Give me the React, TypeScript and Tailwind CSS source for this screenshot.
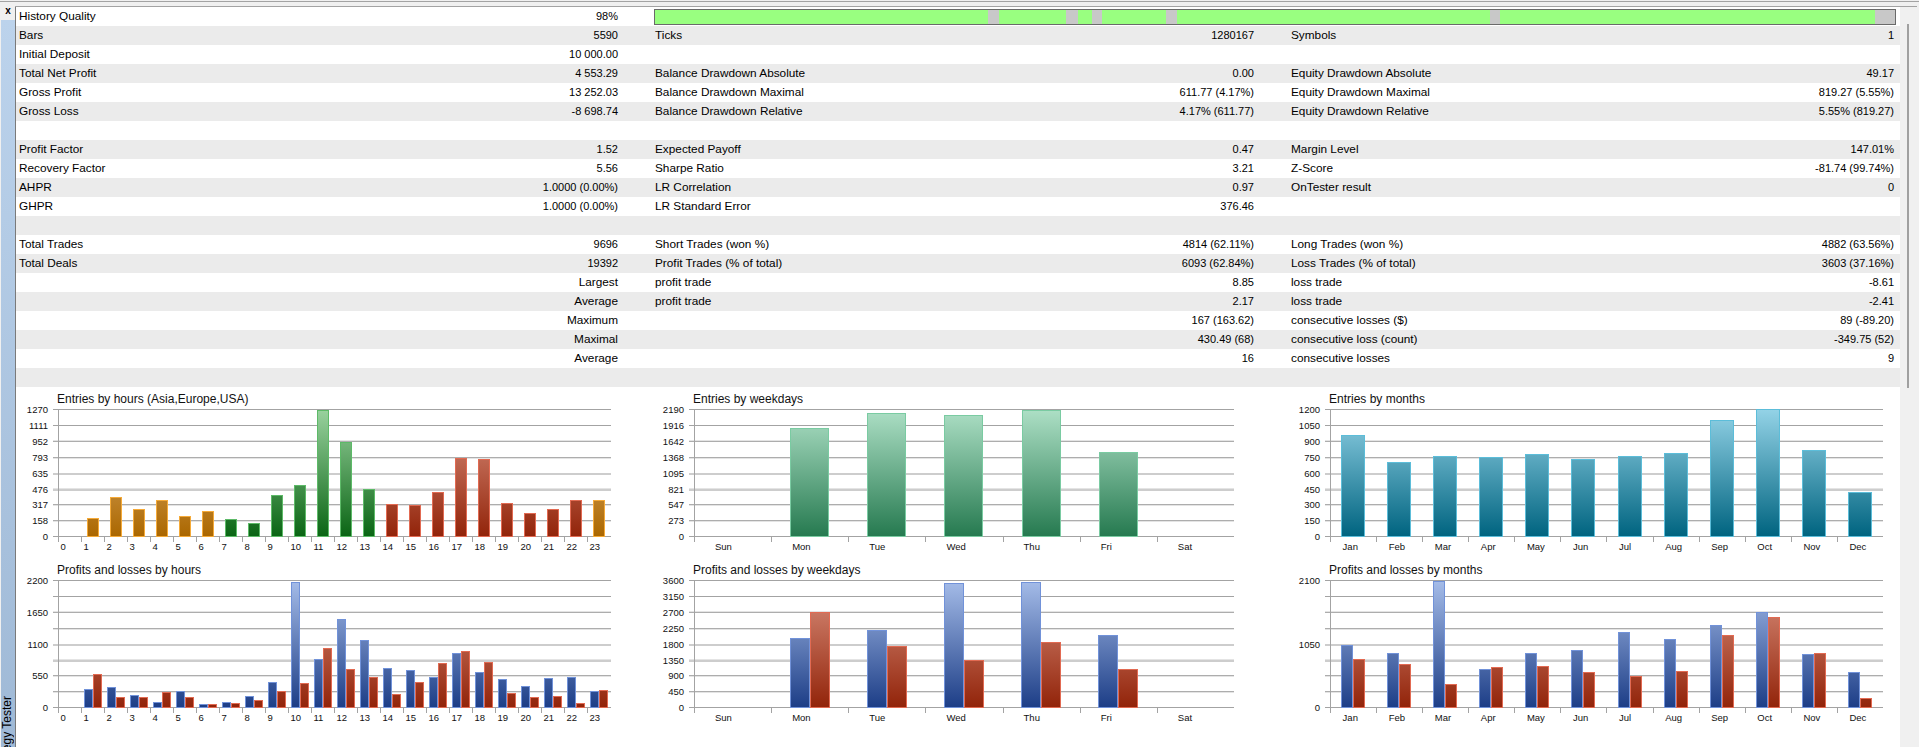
const FONT = "font-['Liberation_Sans',Arial,sans-serif]";

const ROWS: string[][] = [
  ["Bars", "5590", "Ticks", "1280167", "Symbols", "1"],
  ["Initial Deposit", "10 000.00", "", "", "", ""],
  ["Total Net Profit", "4 553.29", "Balance Drawdown Absolute", "0.00", "Equity Drawdown Absolute", "49.17"],
  ["Gross Profit", "13 252.03", "Balance Drawdown Maximal", "611.77 (4.17%)", "Equity Drawdown Maximal", "819.27 (5.55%)"],
  ["Gross Loss", "-8 698.74", "Balance Drawdown Relative", "4.17% (611.77)", "Equity Drawdown Relative", "5.55% (819.27)"],
  ["", "", "", "", "", ""],
  ["Profit Factor", "1.52", "Expected Payoff", "0.47", "Margin Level", "147.01%"],
  ["Recovery Factor", "5.56", "Sharpe Ratio", "3.21", "Z-Score", "-81.74 (99.74%)"],
  ["AHPR", "1.0000 (0.00%)", "LR Correlation", "0.97", "OnTester result", "0"],
  ["GHPR", "1.0000 (0.00%)", "LR Standard Error", "376.46", "", ""],
  ["", "", "", "", "", ""],
  ["Total Trades", "9696", "Short Trades (won %)", "4814 (62.11%)", "Long Trades (won %)", "4882 (63.56%)"],
  ["Total Deals", "19392", "Profit Trades (% of total)", "6093 (62.84%)", "Loss Trades (% of total)", "3603 (37.16%)"],
  ["", "Largest", "profit trade", "8.85", "loss trade", "-8.61"],
  ["", "Average", "profit trade", "2.17", "loss trade", "-2.41"],
  ["", "Maximum", "", "167 (163.62)", "consecutive losses ($)", "89 (-89.20)"],
  ["", "Maximal", "", "430.49 (68)", "consecutive loss (count)", "-349.75 (52)"],
  ["", "Average", "", "16", "consecutive losses", "9"],
  ["", "", "", "", "", ""],
];

// [width, isGap] of the history quality bar
const QUALITY: [number, boolean][] = [
  [333, false], [11, true], [67, false], [12, true], [14, false], [10, true],
  [64, false], [11, true], [313, false], [10, true], [375, false], [20, true],
];

const COLORS = {
  orange: { top: "#e8c08a", bottom: "#ab6700", edge: "#f5aa38" },
  green: { top: "#9ad29f", bottom: "#0a6514", edge: "#5dba68" },
  red: { top: "#dc9380", bottom: "#92240a", edge: "#e26a52" },
  sea: { top: "#aee0c6", bottom: "#267a50", edge: "#7acba2" },
  teal: { top: "#94d3e7", bottom: "#006480", edge: "#5cbdd9" },
  blue: { top: "#a6bde9", bottom: "#1d3e87", edge: "#7192d9" },
};
type ColorName = keyof typeof COLORS;

const GRID_Y = [22, 38, 54, 70, 86, 102, 117, 133, 149];
const GRID_STYLE = [
  { main: "#a3a3a3", h: 1 },
  { main: "#a3a3a3", h: 1 },
  { main: "#adadad", h: 1, halo: -1 },
  { main: "#adadad", h: 1, halo: 1 },
  { main: "#cdcdcd", h: 2 },
  { main: "#cdcdcd", h: 2, halo: -1 },
  { main: "#adadad", h: 1, halo: 1 },
  { main: "#adadad", h: 1, halo: 1 },
  { main: "#a3a3a3", h: 1 },
];

const HOURS = Array.from({ length: 24 }, (_, i) => String(i));
const DAYS = ["Sun", "Mon", "Tue", "Wed", "Thu", "Fri", "Sat"];
const MONTHS = ["Jan", "Feb", "Mar", "Apr", "May", "Jun", "Jul", "Aug", "Sep", "Oct", "Nov", "Dec"];

function hourColor(i: number): ColorName {
  if (i >= 7 && i <= 13) return "green";
  if (i >= 14 && i <= 22) return "red";
  return "orange";
}

type ChartProps = {
  id: string;
  title: string;
  width: number;
  left: number;
  right: number;
  cell: number;
  titleX: number;
  max: number;
  ticks: (string | null)[];
  labels: string[];
  labelOffset: number;
  barWidth: number;
  gap?: number;
  series: { color: (i: number) => ColorName; values: number[] }[];
};

function Chart({ id, title, width, left, right, cell, titleX, max, ticks, labels, labelOffset, barWidth, gap = 0, series }: ChartProps) {
  const bottom = 149;
  const plot = 127;
  const used = Object.keys(COLORS) as ColorName[];
  const total = series.length * barWidth + (series.length - 1) * gap;

  return (
    <svg width={width} height={171} className={`block ${FONT}`}>
      <defs>
        {used.map((c) => (
          <linearGradient key={c} id={`${id}-${c}`} gradientUnits="userSpaceOnUse" x1="0" x2="0" y1="22" y2="149">
            <stop offset="0" stopColor={COLORS[c].top} />
            <stop offset="1" stopColor={COLORS[c].bottom} />
          </linearGradient>
        ))}
      </defs>

      <text x={titleX} y={16} fontSize={12} fill="#111">{title}</text>

      {/* grid */}
      <g shapeRendering="crispEdges">
        {GRID_Y.map((y, i) => {
          const s = GRID_STYLE[i];
          return (
            <g key={y}>
              {s.halo && <rect x={left - 5} y={y + (s.halo < 0 ? -1 : 1)} width={right - left + 5} height={1} fill="#e4e4e4" />}
              <rect x={left - 5} y={y} width={right - left + 5} height={s.h} fill={s.main} />
            </g>
          );
        })}
        <rect x={left} y={22} width={1} height={132} fill="#a3a3a3" />
        {labels.map((_, i) => (
          <rect key={i} x={Math.round(left + cell * i)} y={149} width={1} height={6} fill="#a3a3a3" />
        ))}
      </g>

      {/* bars */}
      <g shapeRendering="crispEdges">
        {labels.map((_, i) =>
          series.map((s, k) => {
            const v = s.values[i] ?? 0;
            if (!v) return null;
            const h = Math.round((v / max) * plot);
            const x = Math.round(left + cell * i + (cell - total) / 2 + k * (barWidth + gap));
            const name = s.color(i);
            return (
              <g key={`${i}-${k}`}>
                <rect x={x} y={bottom - h} width={barWidth} height={h + 1} fill={COLORS[name].edge} />
                <rect x={x + 1} y={bottom - h + 1} width={barWidth - 2} height={h - 1} fill={`url(#${id}-${name})`} />
              </g>
            );
          })
        )}
      </g>

      {/* axis text */}
      {ticks.map((t, i) =>
        t ? (
          <text key={i} x={left - 10} y={GRID_Y[8 - i] + 4} fontSize={9.5} textAnchor="end" fill="#111">{t}</text>
        ) : null
      )}
      {labels.map((l, i) => (
        <text key={l} x={left + cell * i + labelOffset} y={163} fontSize={9.5} fill="#111">{l}</text>
      ))}
    </svg>
  );
}

const RED = () => "red" as ColorName;
const BLUE = () => "blue" as ColorName;

function Value({ text }: { text: string }) {
  // words in the value column ("Largest", "Average") are set like labels
  return <span className={/^[A-Z]/.test(text) ? "text-[11.8px]" : "text-[11px]"}>{text}</span>;
}

function StatRow({ cells, shaded }: { cells: string[]; shaded: boolean }) {
  return (
    <div className={`grid h-[19px] grid-cols-[636px_636px_611px] items-center leading-[19px] ${shaded ? "bg-[#ebebeb]" : "bg-white"}`}>
      <div className="flex justify-between pl-[3px] pr-[34px]">
        <span>{cells[0]}</span>
        <Value text={cells[1]} />
      </div>
      <div className="flex justify-between pl-[3px] pr-[34px]">
        <span>{cells[2]}</span>
        <Value text={cells[3]} />
      </div>
      <div className="flex justify-between pl-[3px] pr-[5px]">
        <span>{cells[4]}</span>
        <Value text={cells[5]} />
      </div>
    </div>
  );
}

export default function App() {
  return (
    <div className={`flex h-[747px] w-[1919px] flex-col overflow-hidden bg-[#f0f0f0] text-[11.8px] text-black ${FONT}`}>
      <div className="mt-px h-px shrink-0 bg-[#a3a3a3]" />
      <div className="flex min-h-0 flex-1">
        {/* Docked tab strip */}
        <div className="flex w-[15px] shrink-0 flex-col pl-px">
          <div className="flex h-[18px] items-center justify-center text-[10px] font-bold leading-none">x</div>
          <div className="flex-1 overflow-hidden bg-linear-to-b from-[#bcd3ec] to-[#9fb9d6] pt-[676px] pl-px">
            <div className="rotate-180 whitespace-nowrap text-[12px] leading-[11px] [writing-mode:vertical-rl]">
              Strategy Tester
            </div>
          </div>
        </div>

        <div className="flex min-w-0 flex-1 flex-col pt-[4px]">
          <div className="h-px w-[1902px] shrink-0 bg-[#a3a3a3]" />
          <div className="flex min-h-0 flex-1">
            <div className="h-full w-px shrink-0 bg-[#7a7a7a]" />
            <div className="w-[1884px] shrink-0 bg-white">
              <div className="grid h-[19px] grid-cols-[636px_1248px] items-center bg-white leading-[19px]">
                <div className="flex justify-between pl-[3px] pr-[34px]">
                  <span>History Quality</span>
                  <Value text="98%" />
                </div>
                <div className="ml-[2px] flex h-[16px] w-[1242px] border border-[#6a6a6a]">
                  {QUALITY.map(([w, gap], i) => (
                    <div key={i} className={gap ? "bg-[#c8c8c8]" : "bg-[#99ff80]"} style={{ width: w }} />
                  ))}
                </div>
              </div>
              {ROWS.map((cells, i) => (
                <StatRow key={i} cells={cells} shaded={i % 2 === 0} />
              ))}

              <div className="grid grid-cols-[624px_639px_621px] grid-rows-[171px_171px]">
                <Chart
                  id="c1"
                  title="Entries by hours (Asia,Europe,USA)"
                  width={624}
                  left={42}
                  right={595}
                  cell={23}
                  titleX={41}
                  max={1270}
                  ticks={["0", "158", "317", "476", "635", "793", "952", "1111", "1270"]}
                  labels={HOURS}
                  labelOffset={2.5}
                  barWidth={12}
                  series={[{
                    color: hourColor,
                    values: [0, 180, 387, 270, 363, 200, 247, 170, 133, 410, 513, 1263, 940, 473, 320, 313, 440, 780, 773, 330, 233, 270, 363, 357],
                  }]}
                />
                <Chart
                  id="c2"
                  title="Entries by weekdays"
                  width={639}
                  left={54}
                  right={594}
                  cell={77.14}
                  titleX={53}
                  max={2190}
                  ticks={["0", "273", "547", "821", "1095", "1368", "1642", "1916", "2190"]}
                  labels={DAYS}
                  labelOffset={21}
                  barWidth={39}
                  series={[{ color: () => "sea", values: [0, 1868, 2115, 2081, 2178, 1448, 0] }]}
                />
                <Chart
                  id="c3"
                  title="Entries by months"
                  width={621}
                  left={51}
                  right={604}
                  cell={46.08}
                  titleX={50}
                  max={1200}
                  ticks={["0", "150", "300", "450", "600", "750", "900", "1050", "1200"]}
                  labels={MONTHS}
                  labelOffset={12.6}
                  barWidth={24}
                  series={[{ color: () => "teal", values: [954, 696, 753, 750, 778, 731, 756, 784, 1093, 1197, 816, 416] }]}
                />
                <Chart
                  id="c4"
                  title="Profits and losses by hours"
                  width={624}
                  left={42}
                  right={595}
                  cell={23}
                  titleX={41}
                  max={2200}
                  ticks={["0", null, "550", null, "1100", null, "1650", null, "2200"]}
                  labels={HOURS}
                  labelOffset={2.5}
                  barWidth={9}
                  series={[
                    { color: BLUE, values: [0, 306, 352, 202, 81, 271, 46, 81, 190, 427, 2158, 837, 1517, 1154, 675, 640, 514, 929, 600, 490, 358, 508, 525, 271] },
                    { color: RED, values: [0, 565, 167, 179, 260, 167, 46, 63, 115, 283, 410, 1015, 652, 514, 225, 438, 767, 969, 773, 237, 167, 185, 63, 294] },
                  ]}
                />
                <Chart
                  id="c5"
                  title="Profits and losses by weekdays"
                  width={639}
                  left={54}
                  right={594}
                  cell={77.14}
                  titleX={53}
                  max={3600}
                  ticks={["0", "450", "900", "1350", "1800", "2250", "2700", "3150", "3600"]}
                  labels={DAYS}
                  labelOffset={21}
                  barWidth={20}
                  series={[
                    { color: BLUE, values: [0, 1966, 2174, 3506, 3534, 2032, 0] },
                    { color: RED, values: [0, 2684, 1729, 1332, 1843, 1068, 0] },
                  ]}
                />
                <Chart
                  id="c6"
                  title="Profits and losses by months"
                  width={621}
                  left={51}
                  right={604}
                  cell={46.08}
                  titleX={50}
                  max={2100}
                  ticks={["0", null, null, null, "1050", null, null, null, "2100"]}
                  labels={MONTHS}
                  labelOffset={12.6}
                  barWidth={12}
                  series={[
                    { color: BLUE, values: [1025, 887, 2089, 623, 887, 942, 1240, 1130, 1356, 1565, 882, 573] },
                    { color: RED, values: [794, 717, 386, 667, 672, 573, 518, 595, 1185, 1483, 893, 149] },
                  ]}
                />
              </div>
            </div>

            {/* Scrollbar */}
            <div className="flex flex-1 flex-col bg-[#f0f0f0] pt-[17px] pl-[7px]">
              <div className="h-[364px] w-[2px] bg-[#a0a0a0]" />
            </div>
          </div>
        </div>
      </div>
    </div>
  );
}
